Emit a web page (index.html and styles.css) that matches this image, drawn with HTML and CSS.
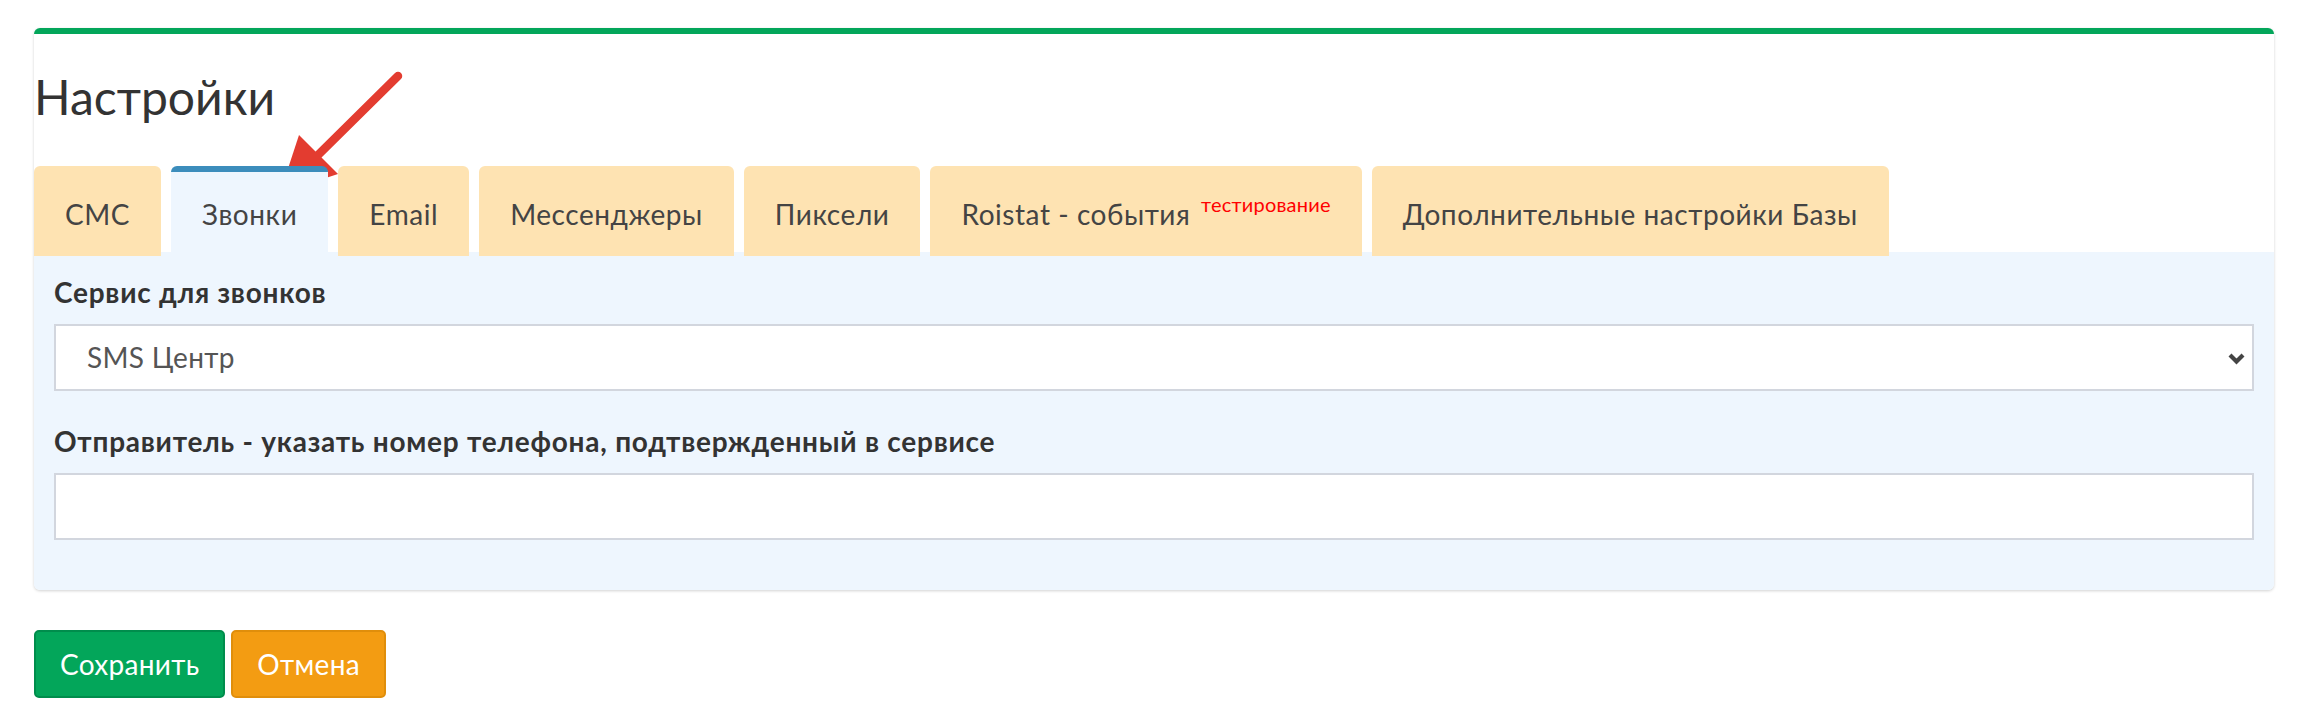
FILE: index.html
```html
<!DOCTYPE html>
<html lang="ru">
<head>
  <meta charset="UTF-8">
  <meta name="viewport" content="width=device-width, initial-scale=1.0">
  <title>Настройки</title>
  <link rel="stylesheet" href="styles.css">
</head>
<body>

<div class="page">

  <!-- Settings box -->
  <div class="box">
    <h1 class="box-title">Настройки</h1>

    <ul class="tabs">
      <li class="tab">СМС</li>
      <li class="tab active">Звонки</li>
      <li class="tab">Email</li>
      <li class="tab">Мессенджеры</li>
      <li class="tab">Пиксели</li>
      <li class="tab">Roistat - события <sup class="beta">тестирование</sup></li>
      <li class="tab">Дополнительные настройки Базы</li>
    </ul>

    <div class="tab-content">
      <div class="form-group">
        <label for="callService">Сервис для звонков</label>
        <div class="select-wrap">
          <select id="callService" class="form-control">
            <option>SMS Центр</option>
          </select>
          <svg class="chevron" viewBox="0 0 19 13">
            <polyline points="3,3 9.5,9.5 16,3" fill="none" stroke="#444" stroke-width="4.2" stroke-linecap="butt" stroke-linejoin="miter"/>
          </svg>
        </div>
      </div>
      <div class="form-group">
        <label for="sender">Отправитель - указать номер телефона, подтвержденный в сервисе</label>
        <input type="text" id="sender" class="form-control">
      </div>
    </div>
  </div>

  <div class="actions">
    <button class="btn btn-success">Сохранить</button>
    <button class="btn btn-warning">Отмена</button>
  </div>

  <!-- annotation arrow -->
  <svg class="arrow" viewBox="270 65 140 140">
    <line x1="398" y1="76" x2="315" y2="158" stroke="#e33c30" stroke-width="8.5" stroke-linecap="round"/>
    <polygon points="280,193 299,135 338,174" fill="#e33c30"/>
  </svg>
</div>

</body>
</html>
```

FILE: styles.css
```css
body {
  margin: 0;
  font-family: Lato, "Noto Sans", sans-serif;
  font-size: 28px;
  color: #333;
  background: #fff;
}
.page {
  position: relative;
  padding: 28px 26px 0 34px;
}
.box {
  background: #fff;
  border-top: 6px solid #03a65a;
  border-radius: 6px;
  box-shadow: 0 1px 3px rgba(0,0,0,0.18);
}
.box-title {
  margin: 0;
  padding: 37px 0 42px;
  font-size: 48px;
  font-weight: normal;
  line-height: 1.1;
  color: #333;
}
.tabs {
  display: flex;
  gap: 10px;
  list-style: none;
  margin: 0 0 -4px;
  padding: 0;
  position: relative;
  z-index: 1;
}
.tab {
  background: #fee3b2;
  border-top: 6px solid transparent;
  border-radius: 6px 6px 0 0;
  padding: 22px 31px;
  line-height: 40px;
  letter-spacing: 0.55px;
  color: #444;
}
.tab.active {
  background: #eef6fe;
  border-top-color: #3c8dbc;
}
.beta {
  color: #f00;
  font-size: 20px;
  line-height: 0;
  letter-spacing: 0.2px;
  vertical-align: 13px;
  margin-left: 3px;
}
.tab-content {
  background: #eef6fe;
  padding: 19px 20px 21px;
  border-radius: 0 0 6px 6px;
}
.form-group {
  margin-bottom: 29px;
}
label {
  display: block;
  font-weight: bold;
  line-height: 42px;
  letter-spacing: 0.75px;
  margin-bottom: 11px;
}
.form-control {
  display: block;
  width: 100%;
  box-sizing: border-box;
  height: 67px;
  padding: 12px 31px;
  font: inherit;
  letter-spacing: 0.3px;
  color: #555;
  background: #fff;
  border: 2px solid #d2d6de;
  border-radius: 0;
  outline: none;
}
select.form-control {
  appearance: none;
  -webkit-appearance: none;
}
.select-wrap {
  position: relative;
}
.chevron {
  position: absolute;
  right: 8px;
  top: 28px;
  width: 19px;
  height: 13px;
}
.actions {
  display: flex;
  gap: 6px;
  padding-top: 40px;
}
.btn {
  font: inherit;
  line-height: 40px;
  letter-spacing: 0.3px;
  padding: 12px 24px;
  border: 2px solid;
  border-radius: 5px;
  color: #fff;
  cursor: pointer;
}
.btn-success {
  background: #03a65a;
  border-color: #008d4c;
}
.btn-warning {
  background: #f39c12;
  border-color: #e08e0b;
}
.arrow {
  position: absolute;
  left: 270px;
  top: 65px;
  width: 140px;
  height: 140px;
}
```
